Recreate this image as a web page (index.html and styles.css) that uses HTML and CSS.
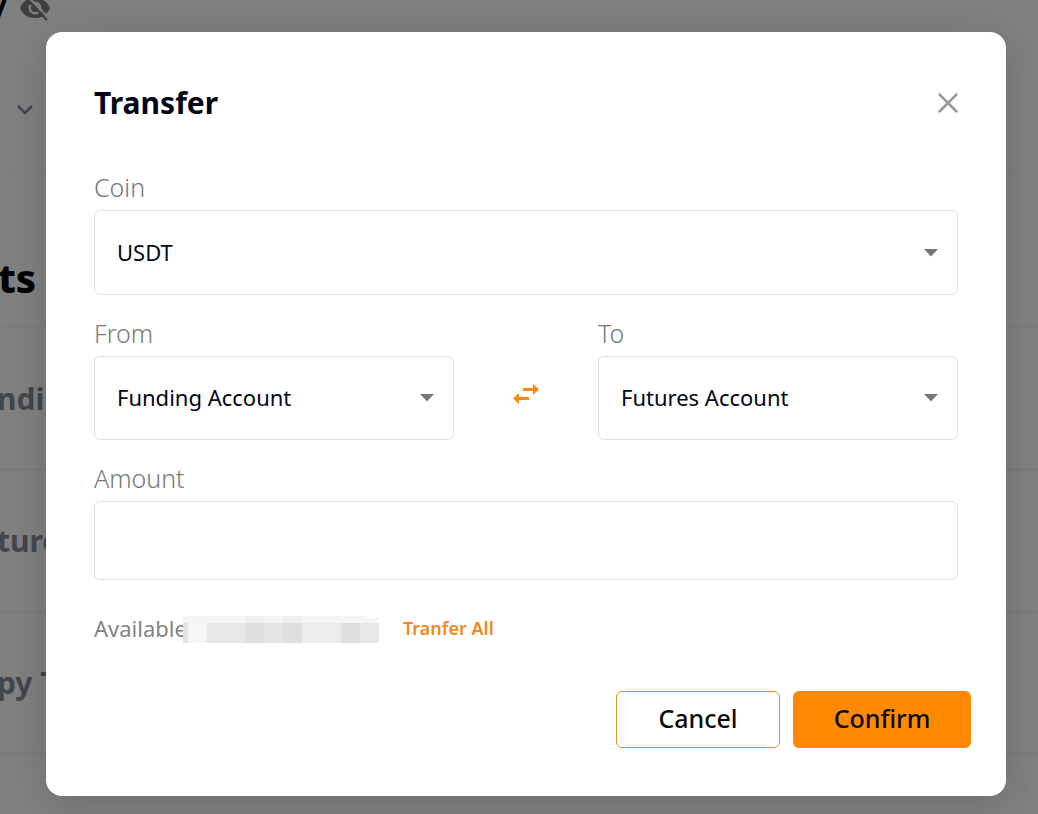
FILE: index.html
```
<!DOCTYPE html>
<html lang="en">
<head>
<meta charset="utf-8">
<meta name="viewport" content="width=device-width, initial-scale=1">
<title>Transfer</title>
<link rel="stylesheet" href="styles.css">
</head>
<body>
<div class="page">
  <div class="page-top">
    <span class="page-slash">/</span>
    <svg class="eye" viewBox="0 0 32 28" aria-hidden="true">
      <path fill="#3f3f3f" fill-rule="evenodd" d="M1 14C4 7 9 4 16 4s12 3 15 10c-3 7-8 10-15 10S4 21 1 14zM16 7.500a6.500 6.500 0 1 0 0 13a6.500 6.500 0 0 0 0-13zM16 10a4 4 0 1 1 0 8a4 4 0 0 1 0-8z"/>
      <path stroke="#808080" stroke-width="2" d="M7 1L30 24"/>
      <path stroke="#3f3f3f" stroke-width="2.500" d="M5 2L28 26"/>
    </svg>
  </div>
  <div class="page-account">
    <svg class="chevron" viewBox="0 0 18 12" aria-hidden="true"><path fill="none" stroke="#43464c" stroke-width="2.500" d="M2 2l7 7 7-7"/></svg>
  </div>
  <div class="page-heading">ts</div>
  <div class="page-row">nding</div>
  <div class="page-row">tures</div>
  <div class="page-row">py Trading</div>
</div>

<div class="overlay">
  <form class="modal" role="dialog" aria-labelledby="title">
    <header class="modal-head">
      <h1 class="title" id="title">Transfer</h1>
      <button class="close" type="button" aria-label="Close">
        <svg class="close-icon" viewBox="0 0 20 20" aria-hidden="true"><path stroke="#999" stroke-width="2.500" stroke-linecap="round" d="M1.500 1.500l17 17M18.500 1.500l-17 17"/></svg>
      </button>
    </header>

    <div class="group">
      <label class="label" for="coin">Coin</label>
      <div class="select-box">
        <select class="control coin" id="coin"><option>USDT</option></select>
        <svg class="arrow" viewBox="0 0 14 8" aria-hidden="true"><path fill="#757575" d="M0 0h14L7 7.500z"/></svg>
      </div>
    </div>

    <div class="accounts">
      <div class="group">
        <label class="label" for="from">From</label>
        <div class="select-box">
          <select class="control" id="from"><option>Funding Account</option></select>
          <svg class="arrow" viewBox="0 0 14 8" aria-hidden="true"><path fill="#757575" d="M0 0h14L7 7.500z"/></svg>
        </div>
      </div>
      <button class="swap" type="button" aria-label="Swap accounts">
        <svg class="swap-icon" viewBox="0 0 26 20" aria-hidden="true"><path fill="#fb8b0e" d="M10 4h10V0l6 5.500-6 5.500V7H10zM16 13H6V9l-6 5.500L6 20v-4h10z"/></svg>
      </button>
      <div class="group">
        <label class="label" for="to">To</label>
        <div class="select-box">
          <select class="control" id="to"><option>Futures Account</option></select>
          <svg class="arrow" viewBox="0 0 14 8" aria-hidden="true"><path fill="#757575" d="M0 0h14L7 7.500z"/></svg>
        </div>
      </div>
    </div>

    <div class="group">
      <label class="label" for="amount">Amount</label>
      <input class="control amount" id="amount" type="text" inputmode="decimal">
    </div>

    <div class="available">
      <span class="available-label">Available</span>
      <svg class="mosaic" viewBox="0 0 196 32" shape-rendering="crispEdges" aria-hidden="true">
        <path fill="#f5f5f6" d="M0 4h183v2h13v5H0z"/>
        <path fill="#eeeff0" d="M62 4h19v7H62zM100 4h19v7h-19z"/>
        <path fill="#e2e2e3" d="M0 11h5v20H0z"/>
        <path fill="#f6f6f6" d="M5 11h19v20H5z"/>
        <path fill="#e8e8e9" d="M24 11h172v20H24z"/>
        <path fill="#dedfe1" d="M62 11h19v20H62zM100 11h19v20h-19zM158 11h19v20h-19z"/>
        <path fill="#e3e4e5" d="M81 11h19v20H81z"/>
        <path fill="#ebecec" d="M119 11h39v20h-39z"/>
      </svg>
      <button class="all" type="button">Tranfer All</button>
    </div>

    <footer class="actions">
      <button class="btn cancel" type="button">Cancel</button>
      <button class="btn confirm" type="submit">Confirm</button>
    </footer>
  </form>
</div>
</body>
</html>
```
FILE: styles.css
```
* { box-sizing: border-box; }

body {
  margin: 0;
  min-height: 100vh;
  background: #808080;
  font-family: "Noto Sans", sans-serif;
  overflow: hidden;
}

button, select, input { font-family: inherit; margin: 0; }
button { cursor: pointer; padding: 0; border: 0; background: none; }

/* Dimmed page behind the dialog */
.page {
  position: absolute;
  inset: 0;
  overflow: hidden;
  color: #43464c;
}
.page-top {
  display: flex;
  align-items: center;
  height: 16px;
  gap: 12px;
}
.page-slash {
  width: 7px;
  direction: rtl;
  color: #000;
  font-size: 28px;
  font-weight: 800;
  line-height: 12px;
}
.eye { width: 32px; height: 28px; flex: none; }
.page-account {
  display: flex;
  align-items: center;
  height: 158px;
  padding: 32px 0 0 16px;
  border-bottom: 2px solid #7e7e81;
}
.chevron { width: 18px; height: 12px; }
.page-heading {
  height: 154px;
  padding-top: 76px;
  margin-left: -2px;
  border-bottom: 2px solid #7d7d80;
  color: #000;
  font-size: 40px;
  font-weight: 800;
  line-height: 56px;
}
.page-row {
  height: 142px;
  margin-left: -3px;
  border-bottom: 1px solid #777;
  font-size: 30px;
  font-weight: 700;
  line-height: 142px;
}

/* Dialog */
.overlay {
  position: relative;
  padding: 32px 32px 18px 46px;
}
.modal {
  padding: 48px;
  border-radius: 16px;
  background: #fff;
  box-shadow: 0 12px 32px rgba(0, 0, 0, .06), 0 4px 48px rgba(0, 0, 0, .1);
}
.modal-head {
  display: flex;
  align-items: center;
  justify-content: space-between;
  margin-bottom: 45px;
}
.title {
  margin: 0;
  color: #020617;
  font-size: 30px;
  font-weight: 700;
  line-height: 46px;
}
.close { display: flex; }
.close-icon { width: 20px; height: 20px; }

.group {
  display: flex;
  flex-direction: column;
  gap: 7px;
  min-width: 0;
}
.label {
  color: #75787e;
  font-size: 25px;
  font-weight: 300;
  line-height: 32px;
}
.select-box { position: relative; display: flex; }
.control {
  appearance: none;
  width: 100%;
  height: 84px;
  padding: 0 48px 2px 22px;
  border: 1px solid #e0e1e3;
  border-radius: 6px;
  background: #fff;
  color: #020617;
  font-size: 22px;
}
.coin { height: 85px; }
.amount { height: 79px; padding-right: 22px; }
.arrow {
  position: absolute;
  top: calc(50% - 4px);
  right: 20px;
  width: 14px;
  height: 8px;
  pointer-events: none;
}
.accounts {
  display: grid;
  grid-template-columns: 1fr 144px 1fr;
  align-items: end;
  margin: 22px 0;
}
.swap {
  display: flex;
  align-items: center;
  justify-content: center;
  height: 84px;
  padding-bottom: 8px;
}
.swap-icon { width: 26px; height: 20px; }

.available {
  display: flex;
  align-items: center;
  height: 32px;
  margin-top: 32px;
}
.available-label {
  width: 89px;
  color: #808389;
  font-size: 22px;
  line-height: 30px;
  white-space: nowrap;
}
.mosaic { position: relative; width: 196px; height: 32px; flex: none; }
.all {
  margin-left: 24px;
  color: #f08a1d;
  font-size: 18px;
  font-weight: 600;
  line-height: 30px;
}

.actions {
  display: flex;
  justify-content: flex-end;
  gap: 13px;
  margin: 47px -13px 0 0;
}
.btn {
  height: 57px;
  padding-bottom: 3px;
  border-radius: 6px;
  color: #0b0b0b;
  font-size: 25px;
  font-weight: 500;
}
.cancel { width: 164px; border: 1px solid #e0912f; background: #fff; }
.confirm { width: 178px; background: #ff8903; }
```
